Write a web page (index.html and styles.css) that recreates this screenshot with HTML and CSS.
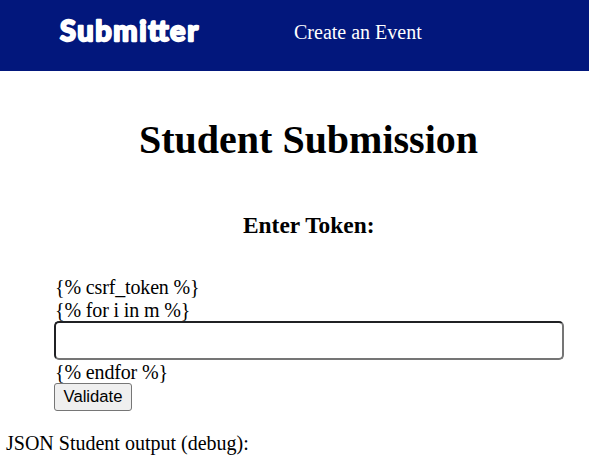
FILE: index.html
```html
<!DOCTYPE html>
<html lang="en">
<head>
<meta charset="utf-8">
<title>Submitter</title>
<link rel="stylesheet" href="styles.css">
</head>
<body>
<header class="navbar">
  <a class="logo">
    <svg width="146" height="40" viewBox="0 0 146 40" role="img">
      <text class="logo-text" x="1" y="29" textLength="138" lengthAdjust="spacing">Submitter</text>
    </svg>
  </a>
  <a class="nav-link">Create an Event</a>
</header>
<main>
  <h1>Student Submission</h1>
  <h3>Enter Token:</h3>
  <form class="token-form">
    <div class="line">{% csrf_token %}</div>
    <div class="line">{% for i in m %}</div>
    <input class="token" type="text" aria-label="Token">
    <div class="line">{% endfor %}</div>
    <button type="button">Validate</button>
  </form>
  <p class="debug">JSON Student output (debug):</p>
</main>
</body>
</html>
```
FILE: styles.css
```css
* { box-sizing: border-box; }
body {
  margin: 0;
  background: #fff;
  color: #000;
  font: 20px/23px "Liberation Serif", "Times New Roman", serif;
}
.navbar {
  display: flex;
  align-items: flex-start;
  height: 71px;
  padding-left: 59px;
  background: #02177c;
  color: #fff;
}
.logo {
  width: 234px;
  padding-top: 12px;
}
.logo svg { display: block; }
.logo-text {
  fill: #fff;
  stroke: #fff;
  stroke-width: 2.3px;
  stroke-linejoin: round;
  stroke-linecap: round;
  font: 700 29px Lato, sans-serif;
}
.nav-link {
  padding: 21px 0 0 1px;
}
h1 {
  margin: 46px 0 0;
  padding-left: 139px;
  font-size: 40px;
  line-height: 46px;
}
h3 {
  margin: 49px 0 0;
  padding-left: 243px;
  font-size: 23.4px;
  line-height: 26px;
}
.token-form {
  width: 510px;
  margin: 37px 0 0 54px;
}
.line {
  height: 23px;
  padding: 1px 0 0 1px;
  line-height: 22px;
  letter-spacing: -0.15px;
}
.token {
  display: block;
  width: 510px;
  height: 39px;
  border: 2px solid;
  border-color: #202124 #757575 #757575 #202124;
  border-radius: 5px;
  background: #fff;
  outline: none;
}
button {
  display: block;
  width: 78px;
  height: 28px;
  padding: 0;
  border: 1px solid #767676;
  border-radius: 3px;
  background: #efefef;
  color: #000;
  font: 16.67px/24px "Liberation Sans", Arial, sans-serif;
}
.debug { margin: 21px 0 0 6px; }
```
